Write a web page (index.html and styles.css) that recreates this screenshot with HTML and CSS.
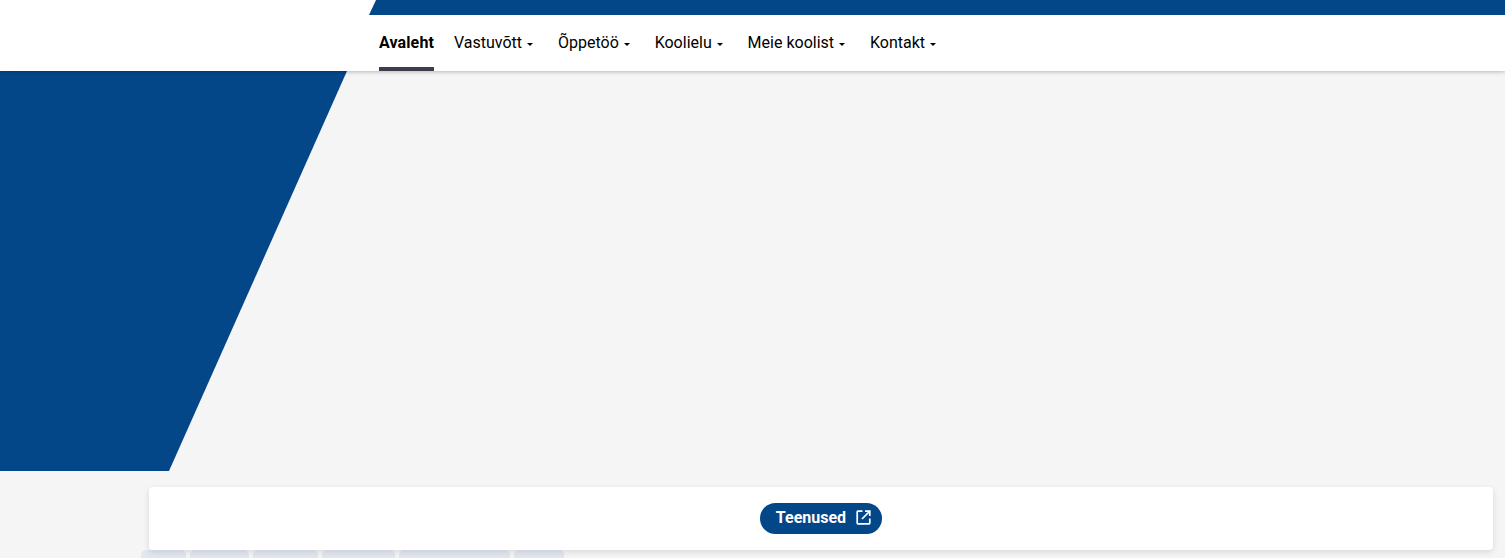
FILE: index.html
```html
<!DOCTYPE html>
<html lang="et">
<head>
    <meta charset="UTF-8">
    <meta name="viewport" content="width=device-width, initial-scale=1.0">
    <title>Avaleht</title>
    <link rel="stylesheet" href="styles.css">
</head>
<body>

    <!-- Header -->
    <header class="site-header">
        <div class="top-strip"></div>
        <nav class="main-nav">
            <a href="#" class="nav-link active">Avaleht</a>
            <a href="#" class="nav-link caret">Vastuvõtt</a>
            <a href="#" class="nav-link caret">Õppetöö</a>
            <a href="#" class="nav-link caret">Koolielu</a>
            <a href="#" class="nav-link caret">Meie koolist</a>
            <a href="#" class="nav-link caret">Kontakt</a>
        </nav>
    </header>

    <!-- Hero -->
    <section class="hero">
        <div class="hero-shape"></div>
    </section>

    <!-- Services -->
    <div class="content">
        <div class="services-card">
            <a href="#" class="services-btn">
                <span class="btn-label">Teenused</span>
                <svg class="ext-icon" viewBox="0 0 15 15" width="15" height="15" fill="none" stroke="#fff" stroke-width="1.7">
                    <path d="M6.5 1.2H1.9a.7.7 0 0 0-.7.7v11.2a.7.7 0 0 0 .7.7h11.2a.7.7 0 0 0 .7-.7V8.5"/>
                    <path d="M9 1.2h4.8V6"/>
                    <path d="M13.8 1.2 6 9"/>
                </svg>
            </a>
        </div>
        <div class="tabs">
            <div class="tab tab-1"></div>
            <div class="tab tab-2"></div>
            <div class="tab tab-3"></div>
            <div class="tab tab-4"></div>
            <div class="tab tab-5"></div>
            <div class="tab tab-6"></div>
        </div>
    </div>

</body>
</html>
```

FILE: styles.css
```css
html, body {
    height: 558px;
    overflow: hidden;
}

body {
    margin: 0;
    background: #f5f5f5;
    font-family: 'Roboto', sans-serif;
    color: #000;
}

/* Header */
.site-header {
    position: relative;
    z-index: 2;
    height: 71px;
    background: #fff;
    box-shadow: 0 1px 4px rgba(0, 0, 0, 0.25);
}

.top-strip {
    height: 15px;
    margin-left: 369px;
    background: #044788;
    clip-path: polygon(7px 0, 100% 0, 100% 100%, 0 100%);
}

.main-nav {
    display: flex;
    height: 56px;
    padding-left: 379px;
    gap: 20px;
}

.nav-link {
    display: flex;
    align-items: center;
    height: 56px;
    box-sizing: border-box;
    color: #000;
    font-size: 16px;
    line-height: 20px;
    text-decoration: none;
    white-space: nowrap;
}

.nav-link.active {
    font-weight: 700;
    letter-spacing: 0.12px;
    border-bottom: 4px solid #3e3c4f;
    padding-top: 4px;
}

.caret {
    margin-right: 4.9px;
}

.caret::after {
    content: "";
    margin-left: 5px;
    margin-top: 2px;
    border-top: 3px solid #000;
    border-left: 3px solid transparent;
    border-right: 3px solid transparent;
}

/* Hero */
.hero {
    height: 400px;
}

.hero-shape {
    width: 347px;
    height: 100%;
    background: #044788;
    clip-path: polygon(0 0, 100% 0, 169px 100%, 0 100%);
}

/* Services */
.content {
    padding: 16px 12px 0 149px;
}

.services-card {
    position: relative;
    z-index: 1;
    display: flex;
    justify-content: center;
    align-items: center;
    height: 63px;
    background: #fff;
    border-radius: 4px;
    box-shadow: 0 2px 6px rgba(0, 0, 0, 0.12);
}

.services-btn {
    display: flex;
    align-items: center;
    gap: 10px;
    height: 31px;
    padding: 0 11px 0 16px;
    border-radius: 16px;
    background: #044788;
    color: #fff;
    font-size: 16px;
    font-weight: 700;
    text-decoration: none;
}

.btn-label {
    padding-bottom: 2px;
}

.ext-icon {
    margin-bottom: 2px;
}

.tabs {
    display: flex;
    gap: 4px;
    margin-left: -8px;
}

.tab {
    height: 30px;
    background: #e1e6f0;
    border-radius: 5px 5px 0 0;
}

.tab-1 { width: 45px; }
.tab-2 { width: 59px; }
.tab-3 { width: 65px; }
.tab-4 { width: 73px; }
.tab-5 { width: 111px; }
.tab-6 { width: 50px; }
```
